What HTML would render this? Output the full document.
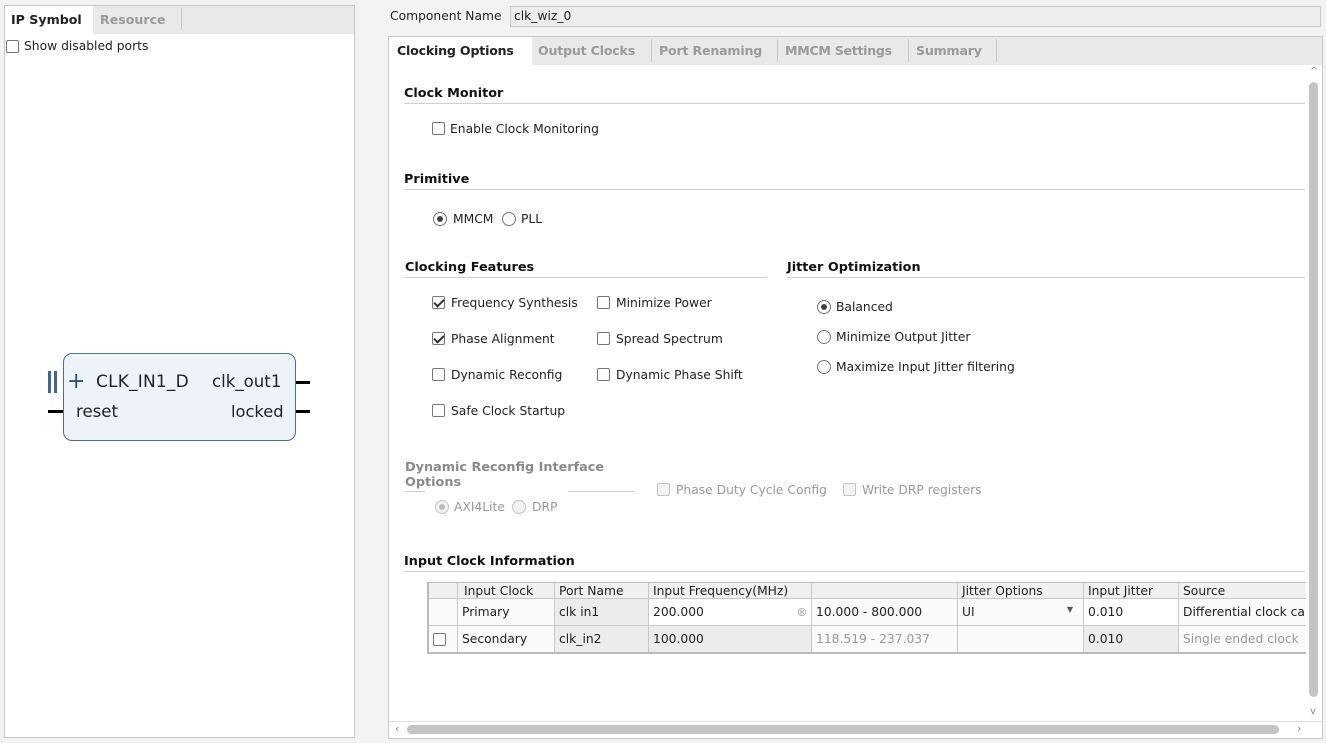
<!DOCTYPE html>
<html><head><meta charset="utf-8"><style>
*{box-sizing:border-box}
body{margin:0;width:1326px;height:743px;background:#f3f3f3;font-family:"DejaVu Sans","Liberation Sans",sans-serif;font-size:12.3px;color:#222;position:relative;overflow:hidden}
.a{position:absolute;white-space:nowrap}
.cb{position:absolute;width:13px;height:13px;border:1px solid #777;border-radius:2px;background:#fff}
.cb.on::after{content:"";position:absolute;left:3px;top:0px;width:4px;height:8px;border:solid #333;border-width:0 2px 2px 0;transform:rotate(45deg)}
.rb{position:absolute;width:14px;height:14px;border:1px solid #777;border-radius:50%;background:#fff}
.rb.on::after{content:"";position:absolute;left:3px;top:3px;width:6px;height:6px;border-radius:50%;background:#444}
.dis{color:#9a9a9a}
.dis .cb,.cb.dis,.rb.dis{border-color:#c4c4c4;background:#f3f3f3}
.rb.dis.on::after{background:#bbb}
.h{position:absolute;font-weight:bold;font-size:12.8px;color:#111}
.t{position:absolute;font-weight:bold;font-size:12.6px}
.ln{position:absolute;height:1px;background:#d0d0d0}
td{border:1px solid #c8c8c8;padding:0 4px;height:27px;white-space:nowrap;overflow:hidden}
</style></head><body>
<div class="a" style="left:4px;top:5px;width:351px;height:733px;border:1px solid #c8c8c8;background:#fff"></div>
<div class="a" style="left:5px;top:6px;width:349px;height:28px;background:#e9e9e9"></div>
<div class="a" style="left:5px;top:6px;width:88px;height:28px;background:#fff"></div>
<div class="t" style="left:11px;top:12px">IP Symbol</div>
<div class="t" style="left:100px;top:12px;color:#999">Resource</div>
<div class="a" style="left:181px;top:8px;width:1px;height:22px;background:#c8c8c8"></div>
<div class="cb" style="left:6px;top:40px"></div>
<div class="a" style="left:24px;top:39px">Show disabled ports</div>
<div class="a" style="left:63px;top:353px;width:233px;height:88px;border:1px solid #4a6ea0;border-radius:9px;background:#eef3fa"></div>
<div class="a" style="left:48px;top:371px;width:3px;height:22px;background:#3f65a0"></div>
<div class="a" style="left:54px;top:371px;width:3px;height:22px;background:#3f65a0"></div>
<div class="a" style="left:67px;top:369px;font-size:22px;color:#2e4e80;line-height:26px">+</div>
<div class="a" style="left:96px;top:372px;font-size:17px;letter-spacing:0.2px">CLK_IN1_D</div>
<div class="a" style="left:212px;top:372px;font-size:16.6px">clk_out1</div>
<div class="a" style="left:76px;top:402px;font-size:16.6px">reset</div>
<div class="a" style="left:231px;top:402px;font-size:16.3px">locked</div>
<div class="a" style="left:48px;top:410px;width:15px;height:3px;background:#000"></div>
<div class="a" style="left:296px;top:381px;width:14px;height:3px;background:#000"></div>
<div class="a" style="left:296px;top:410px;width:14px;height:3px;background:#000"></div>
<div class="a" style="left:390px;top:9px">Component Name</div>
<div class="a" style="left:510px;top:6px;width:811px;height:21px;border:1px solid #c8c8c8;background:#ededed;padding:2px 3px">clk_wiz_0</div>
<div class="a" style="left:388px;top:36px;width:935px;height:703px;border:1px solid #c8c8c8;background:#fff"></div>
<div class="a" style="left:389px;top:37px;width:933px;height:28px;background:#e9e9e9"></div>
<div class="a" style="left:389px;top:37px;width:143px;height:28px;background:#fff"></div>
<div class="t" style="left:397px;top:43px;letter-spacing:-0.2px">Clocking Options</div>
<div class="t" style="left:538px;top:43px;color:#9a9a9a;letter-spacing:-0.2px">Output Clocks</div>
<div class="a" style="left:651px;top:39px;width:1px;height:23px;background:#c8c8c8"></div>
<div class="t" style="left:659px;top:43px;color:#9a9a9a;letter-spacing:-0.2px">Port Renaming</div>
<div class="a" style="left:777px;top:39px;width:1px;height:23px;background:#c8c8c8"></div>
<div class="t" style="left:785px;top:43px;color:#9a9a9a;letter-spacing:-0.3px">MMCM Settings</div>
<div class="a" style="left:908px;top:39px;width:1px;height:23px;background:#c8c8c8"></div>
<div class="t" style="left:916px;top:43px;color:#9a9a9a;letter-spacing:-0.2px">Summary</div>
<div class="a" style="left:996px;top:39px;width:1px;height:23px;background:#c8c8c8"></div>
<div class="a" style="left:1306px;top:65px;width:16px;height:657px;background:#fff"></div>
<div class="a" style="left:1310px;top:66px;font-size:10px;color:#888">^</div>
<div class="a" style="left:1309px;top:82px;width:9px;height:615px;border-radius:5px;background:#c4c4c4"></div>
<div class="a" style="left:1310px;top:706px;font-size:10px;color:#888">v</div>
<div class="a" style="left:389px;top:721px;width:933px;height:16px;background:#fff;border-top:1px solid #e0e0e0"></div>
<div class="a" style="left:395px;top:722px;font-size:11px;color:#888">‹</div>
<div class="a" style="left:407px;top:725px;width:872px;height:9px;border-radius:5px;background:#c4c4c4"></div>
<div class="a" style="left:1297px;top:722px;font-size:11px;color:#888">›</div>
<div class="h" style="left:404px;top:86px">Clock Monitor</div>
<div class="ln" style="left:404px;top:103px;width:901px"></div>
<div class="cb" style="left:432px;top:122px"></div>
<div class="a" style="left:450px;top:122px">Enable Clock Monitoring</div>
<div class="h" style="left:404px;top:172px">Primitive</div>
<div class="ln" style="left:404px;top:189px;width:901px"></div>
<div class="rb on" style="left:433px;top:212px"></div>
<div class="a" style="left:453px;top:212px">MMCM</div>
<div class="rb" style="left:502px;top:212px"></div>
<div class="a" style="left:521px;top:212px">PLL</div>
<div class="h" style="left:405px;top:260px">Clocking Features</div>
<div class="ln" style="left:405px;top:277px;width:362px"></div>
<div class="h" style="left:787px;top:260px">Jitter Optimization</div>
<div class="ln" style="left:787px;top:277px;width:518px"></div>
<div class="cb on" style="left:432px;top:296px"></div><div class="a" style="left:451px;top:296px">Frequency Synthesis</div>
<div class="cb" style="left:597px;top:296px"></div><div class="a" style="left:616px;top:296px">Minimize Power</div>
<div class="cb on" style="left:432px;top:332px"></div><div class="a" style="left:451px;top:332px">Phase Alignment</div>
<div class="cb" style="left:597px;top:332px"></div><div class="a" style="left:616px;top:332px">Spread Spectrum</div>
<div class="cb" style="left:432px;top:368px"></div><div class="a" style="left:451px;top:368px">Dynamic Reconfig</div>
<div class="cb" style="left:597px;top:368px"></div><div class="a" style="left:616px;top:368px">Dynamic Phase Shift</div>
<div class="cb" style="left:432px;top:404px"></div><div class="a" style="left:451px;top:404px">Safe Clock Startup</div>
<div class="rb on" style="left:817px;top:300px"></div><div class="a" style="left:836px;top:300px">Balanced</div>
<div class="rb" style="left:817px;top:330px"></div><div class="a" style="left:836px;top:330px">Minimize Output Jitter</div>
<div class="rb" style="left:817px;top:360px"></div><div class="a" style="left:836px;top:360px">Maximize Input Jitter filtering</div>
<div class="h" style="left:405px;top:460px;color:#8a8a8a;line-height:15px">Dynamic Reconfig Interface<br>Options</div>
<div class="ln" style="left:405px;top:491px;width:20px"></div>
<div class="ln" style="left:568px;top:491px;width:66px"></div>
<div class="cb dis" style="left:657px;top:483px"></div><div class="a dis" style="left:676px;top:483px">Phase Duty Cycle Config</div>
<div class="cb dis" style="left:843px;top:483px"></div><div class="a dis" style="left:862px;top:483px">Write DRP registers</div>
<div class="rb dis on" style="left:435px;top:500px"></div><div class="a dis" style="left:454px;top:500px">AXI4Lite</div>
<div class="rb dis" style="left:512px;top:500px"></div><div class="a dis" style="left:532px;top:500px">DRP</div>
<div class="h" style="left:404px;top:554px">Input Clock Information</div>
<div class="ln" style="left:404px;top:571px;width:901px"></div>
<div class="a" style="left:427px;top:582px;width:879px;height:72px;overflow:hidden;border-left:2px solid #bbb;border-top:1px solid #bbb;border-bottom:2px solid #bbb">
<table style="border-collapse:collapse;font-size:12.3px;table-layout:fixed;width:920px;margin:-1px 0 0 -1px">
<colgroup><col style="width:29px"><col style="width:97px"><col style="width:94px"><col style="width:163px"><col style="width:146px"><col style="width:126px"><col style="width:95px"><col style="width:170px"></colgroup>
<tr style="background:#f0f0f0"><td style="height:16px"></td><td style="height:16px;padding-left:6px">Input Clock</td><td style="height:16px">Port Name</td><td style="height:16px">Input Frequency(MHz)</td><td style="height:16px"></td><td style="height:16px">Jitter Options</td><td style="height:16px">Input Jitter</td><td style="height:16px">Source</td></tr>
<tr style="background:#fafafa"><td></td><td>Primary</td><td style="background:#ececec">clk in1</td><td style="background:#fff">200.000 <span style="float:right;color:#aaa">⊗</span></td><td>10.000 - 800.000</td><td>UI <span style="float:right;font-size:8px;color:#555;padding-right:6px">▼</span></td><td style="background:#fff">0.010</td><td>Differential clock ca</td></tr>
<tr style="background:#fafafa"><td><span class="cb" style="position:relative;display:inline-block;left:0;top:2px"></span></td><td>Secondary</td><td style="background:#ececec">clk_in2</td><td style="background:#ececec">100.000</td><td class="dis">118.519 - 237.037</td><td></td><td style="background:#ececec">0.010</td><td class="dis">Single ended clock</td></tr>
</table></div>
</body></html>
